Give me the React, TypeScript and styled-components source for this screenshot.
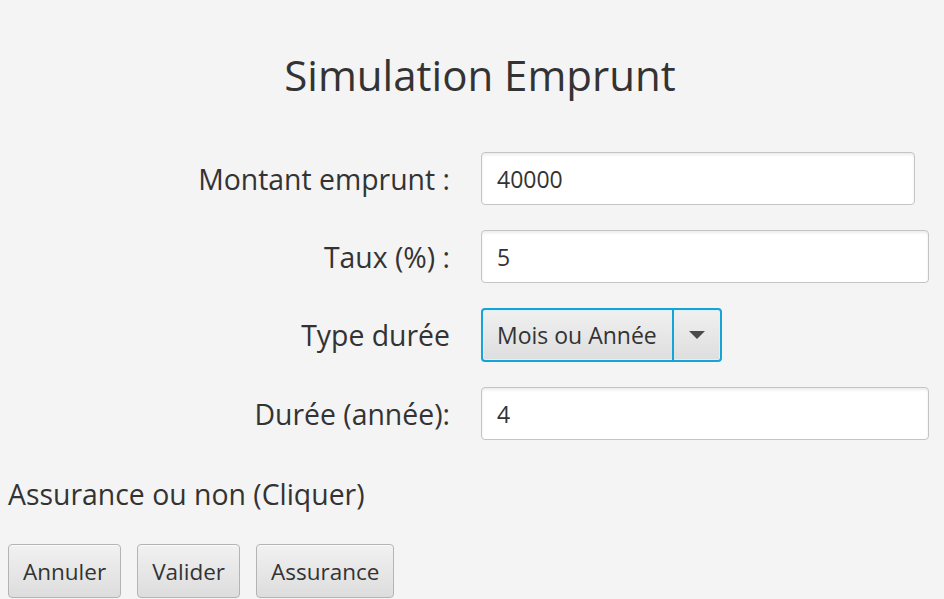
import React from "react";
import styled, { createGlobalStyle } from "styled-components";

const GlobalStyle = createGlobalStyle`
  html, body {
    margin: 0;
    padding: 0;
    background: #f4f4f4;
    font-family: "Open Sans", "Noto Sans", sans-serif;
    color: #333333;
  }
`;

const Page = styled.div`
  width: 944px;
  height: 599px;
  overflow: hidden;
  box-sizing: border-box;
  padding: 43px 0 0 8px;
`;

const Title = styled.h1`
  margin: 0 0 45px 0;
  padding-left: 8px;
  text-align: center;
  font-weight: 400;
  font-size: 42px;
  line-height: 64px;
`;

const Form = styled.div`
  display: grid;
  grid-template-columns: 442px auto;
  column-gap: 31px;
  row-gap: 25px;
  align-items: center;
  justify-items: start;
`;

const Label = styled.label`
  justify-self: end;
  font-size: 28.4px;
  line-height: 40px;
`;

const Field = styled.div<{ $width: number }>`
  width: ${(p) => p.$width}px;
  height: 53px;
  box-sizing: border-box;
  border: 1px solid #c4c4c4;
  border-radius: 4px;
  background: #ffffff;
  box-shadow: inset 0 2px 3px rgba(0, 0, 0, 0.08);
  padding: 0 15px;
  display: flex;
  align-items: center;
  font-size: 23px;
`;

const Combo = styled.div`
  width: 241px;
  height: 54px;
  box-sizing: border-box;
  border: 2px solid #14a4d8;
  border-radius: 4px;
  background: linear-gradient(#f0f0f0, #dedede);
  box-shadow: inset 0 0 0 1px #dff2fa;
  display: flex;
  align-items: stretch;
`;

const ComboText = styled.div`
  flex: 1;
  display: flex;
  align-items: center;
  padding-left: 14px;
  font-size: 23px;
  border-right: 2px solid #14a4d8;
`;

const ComboArrow = styled.div`
  width: 46px;
  display: flex;
  align-items: center;
  justify-content: center;

  &::after {
    content: "";
    border-left: 8px solid transparent;
    border-right: 8px solid transparent;
    border-top: 8px solid #4b4b4b;
  }
`;

const Note = styled.p`
  margin: 34px 0 0 0;
  font-size: 28.4px;
  line-height: 40px;
`;

const ButtonRow = styled.div`
  display: flex;
  gap: 16px;
  margin-top: 30px;
`;

const Button = styled.button`
  height: 54px;
  box-sizing: border-box;
  padding: 0 14px;
  border: 1px solid #b4b4b4;
  border-radius: 4px;
  background: linear-gradient(#f1f1f1, #dddddd);
  box-shadow: inset 0 1px 0 #fafafa;
  font-family: inherit;
  font-size: 22.5px;
  color: #333333;
`;

export default function App() {
  return (
    <>
      <GlobalStyle />
      <Page>
        <Title>Simulation Emprunt</Title>
        <Form>
          <Label>Montant emprunt :</Label>
          <Field $width={434}>40000</Field>
          <Label>Taux (%) :</Label>
          <Field $width={448}>5</Field>
          <Label>Type durée</Label>
          <Combo>
            <ComboText>Mois ou Année</ComboText>
            <ComboArrow />
          </Combo>
          <Label>Durée (année):</Label>
          <Field $width={448}>4</Field>
        </Form>
        <Note>Assurance ou non (Cliquer)</Note>
        <ButtonRow>
          <Button>Annuler</Button>
          <Button>Valider</Button>
          <Button>Assurance</Button>
        </ButtonRow>
      </Page>
    </>
  );
}
